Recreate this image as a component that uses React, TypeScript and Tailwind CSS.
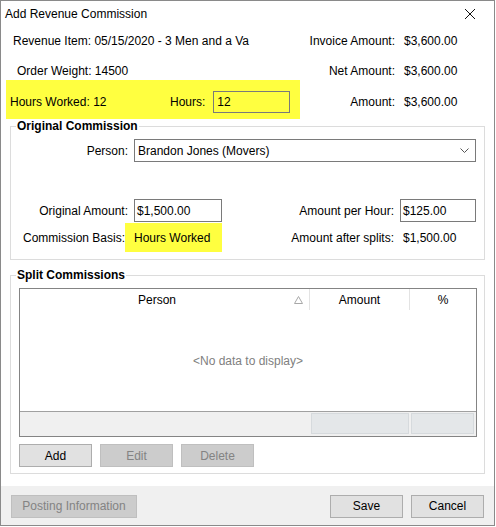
import * as React from "react"

function Btn({ label, disabled, width = "w-[73px]" }: { label: string; disabled?: boolean; width?: string }) {
  return (
    <div
      className={`${width} h-[23px] flex items-center justify-center border ${
        disabled ? "bg-[#cccccc] border-[#bfbfbf] text-[#838383]" : "bg-[#e1e1e1] border-[#adadad] text-black"
      }`}
    >
      {label}
    </div>
  )
}

function Group({ title, className, children }: { title: string; className: string; children: React.ReactNode }) {
  return (
    <div className={`relative ml-[9px] w-[475px] border border-[#dcdcdc] ${className}`}>
      <span className="absolute left-[5px] top-[-8px] bg-white px-[1px] font-bold">{title}</span>
      {children}
    </div>
  )
}

export default function App() {
  return (
    <div className="w-[496px] h-[527px] bg-white text-[12px] leading-[14px] text-black font-['Liberation_Sans',Arial,sans-serif]">
      <div className="w-[495px] h-[526px] border border-[#8a8a8a] flex flex-col">
        {/* title bar */}
        <div className="h-[25px] shrink-0 flex items-center justify-between pl-[4px] pr-[18px] mb-[1px]">
          <span>Add Revenue Commission</span>
          <svg width="12" height="12" viewBox="0 0 12 12">
            <path d="M1 1 L11 11 M11 1 L1 11" stroke="#111" strokeWidth="1" />
          </svg>
        </div>

        {/* summary rows */}
        <div className="h-[28px] shrink-0 flex items-center">
          <span className="pl-[12px]">Revenue Item: 05/15/2020 - 3 Men and a Va</span>
          <div className="ml-auto flex">
            <span>Invoice Amount:</span>
            <span className="w-[99px] pl-[9px]">$3,600.00</span>
          </div>
        </div>
        <div className="h-[25px] shrink-0 flex items-end pb-[2px]">
          <span className="pl-[16px]">Order Weight: 14500</span>
          <div className="ml-auto flex">
            <span>Net Amount:</span>
            <span className="w-[99px] pl-[9px]">$3,600.00</span>
          </div>
        </div>
        <div className="h-[39px] shrink-0 flex items-center">
          <div className="ml-[5px] w-[294px] h-full bg-[#ffff40] flex items-center pl-[4px] pt-[4px]">
            <span className="w-[160px]">Hours Worked: 12</span>
            <span>Hours:</span>
            <div className="ml-[8px] w-[77px] h-[22px] border border-[#7a7a7a] flex items-center pl-[3px]">12</div>
          </div>
          <div className="ml-auto mt-[4px] flex">
            <span>Amount:</span>
            <span className="w-[99px] pl-[9px]">$3,600.00</span>
          </div>
        </div>

        {/* Original Commission */}
        <Group title="Original Commission" className="mt-[7px] pt-[12px] pb-[7px] pr-[8px]">
          <div className="h-[23px] flex items-center">
            <span className="w-[117px] text-right">Person:</span>
            <div className="ml-[6px] w-[342px] h-full border border-[#7a7a7a] flex items-center justify-between pl-[3px] pr-[6px]">
              <span>Brandon Jones (Movers)</span>
              <svg width="9" height="6" viewBox="0 0 9 6">
                <path d="M0.5 0.5 L4.5 4.5 L8.5 0.5" fill="none" stroke="#555" strokeWidth="1" />
              </svg>
            </div>
          </div>
          <div className="mt-[37px] h-[23px] flex items-center">
            <span className="w-[117px] text-right">Original Amount:</span>
            <div className="ml-[6px] w-[88px] h-full border border-[#7a7a7a] flex items-center pl-[2px]">$1,500.00</div>
            <span className="flex-1 text-right">Amount per Hour:</span>
            <div className="ml-[6px] w-[76px] h-full border border-[#7a7a7a] flex items-center pl-[2px]">$125.00</div>
          </div>
          <div className="mt-[1px] h-[29px] flex items-center">
            <span className="w-[114px] text-right">Commission Basis:</span>
            <div className="w-[97px] h-full bg-[#ffff40] flex items-center pl-[9px]">Hours Worked</div>
            <span className="flex-1 text-right">Amount after splits:</span>
            <span className="w-[82px] pl-[9px]">$1,500.00</span>
          </div>
        </Group>

        {/* Split Commissions */}
        <Group title="Split Commissions" className="mt-[15px] pt-[12px] pl-[8px] pr-[7px] pb-[6px]">
          <div className="w-[458px] h-[149px] border border-[#848484] flex flex-col">
            <div className="h-[21px] shrink-0 flex">
              <div className="w-[290px] border-r border-[#e3e3e3] flex items-center">
                <span className="flex-1 text-center">Person</span>
                <svg width="9" height="8" viewBox="0 0 9 8" className="mr-[6px]">
                  <path d="M4.5 0.5 L8.5 7.5 L0.5 7.5 Z" fill="none" stroke="#a8a8a8" strokeWidth="1" />
                </svg>
              </div>
              <div className="w-[100px] border-r border-[#e3e3e3] flex items-center justify-center">Amount</div>
              <div className="flex-1 flex items-center justify-center">%</div>
            </div>
            <div className="flex-1 flex items-center justify-center text-[#808080]">&lt;No data to display&gt;</div>
            <div className="h-[25px] shrink-0 bg-[#f0f0f0] border-t border-[#a0a0a0] flex justify-end items-start pt-[1px] pr-[2px] gap-[2px]">
              <div className="w-[98px] h-[21px] bg-[#e4e7e9] border border-[#d6dadd]" />
              <div className="w-[63px] h-[21px] bg-[#e4e7e9] border border-[#d6dadd]" />
            </div>
          </div>
          <div className="mt-[7px] flex gap-[8px]">
            <Btn label="Add" />
            <Btn label="Edit" disabled />
            <Btn label="Delete" disabled />
          </div>
        </Group>

        {/* bottom bar */}
        <div className="mt-auto h-[39px] shrink-0 bg-[#f0f0f0] flex items-center pl-[10px] pr-[10px] pt-[1px]">
          <Btn label="Posting Information" disabled width="w-[126px]" />
          <div className="ml-auto flex gap-[8px]">
            <Btn label="Save" />
            <Btn label="Cancel" />
          </div>
        </div>
      </div>
    </div>
  )
}
